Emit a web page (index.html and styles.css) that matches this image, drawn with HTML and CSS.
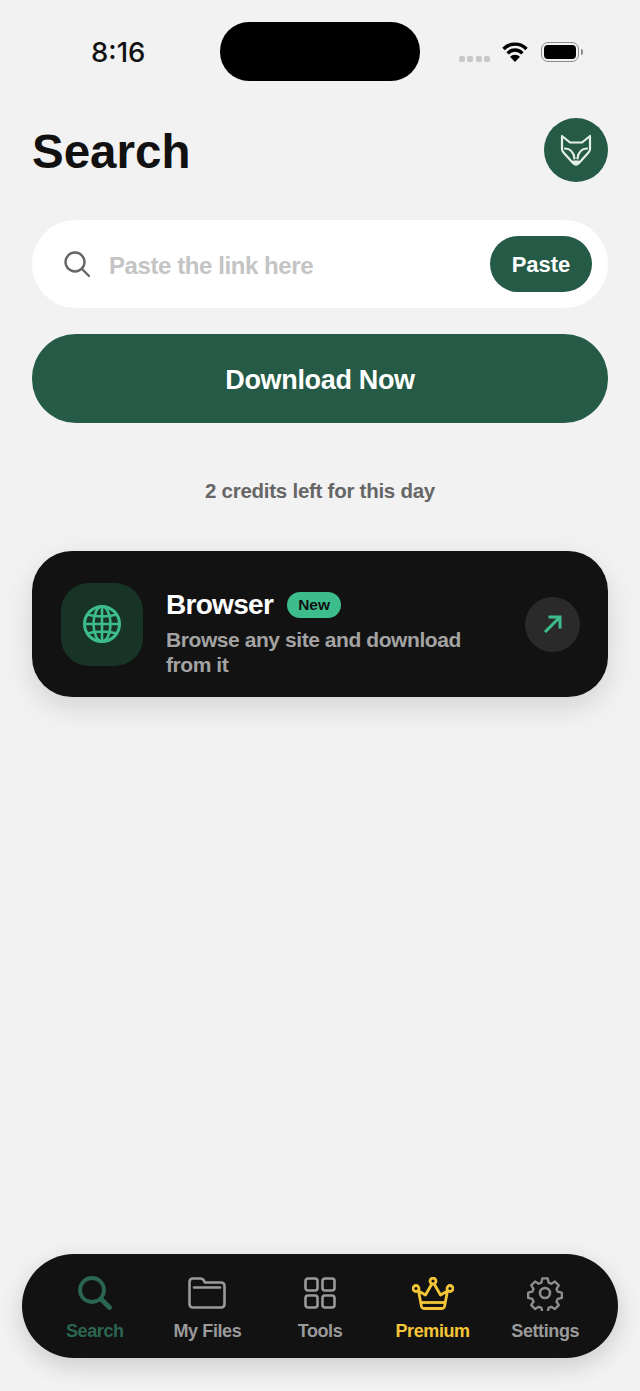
FILE: index.html
```html
<!DOCTYPE html>
<html lang="en">
<head>
    <meta charset="UTF-8">
    <meta name="viewport" content="width=device-width, initial-scale=1.0">
    <title>Search</title>
    <link rel="stylesheet" href="styles.css">
</head>
<body>
    <div class="app">
        <div class="status-bar">
            <span class="time">8:16</span>
            <span class="island"></span>
            <div class="status-icons">
                <span class="signal"><i></i><i></i><i></i><i></i></span>
                <svg class="wifi" width="26" height="20" viewBox="0 0 26 20">
                    <path d="M1.5 7a16 16 0 0 1 23 0M5.600 11.300a10 10 0 0 1 14.800 0" fill="none" stroke="#000" stroke-width="3.400"/>
                    <path d="M13 20l-5-5.200a7 7 0 0 1 10 0z" fill="#000"/>
                </svg>
                <span class="battery"><span class="battery-fill"></span></span>
                <span class="battery-tip"></span>
            </div>
        </div>

        <div class="header">
            <h1>Search</h1>
            <div class="avatar">
                <svg width="32" height="33" viewBox="0 0 32 33" fill="none" stroke="#e6efea" stroke-width="2.200" stroke-linejoin="round" stroke-linecap="round">
                    <path d="M2 2l8 6.500h12L30 2v13q0 2-1.500 3.500L19 29q-3 3-6 0L3.500 18.500Q2 17 2 15z"/>
                    <path d="M5 14.500q8 0 9.500 10M27 14.500q-8 0-9.500 10"/>
                    <path d="M13.500 27.500h5L16 30z" fill="#e6efea"/>
                </svg>
            </div>
        </div>

        <div class="search-box">
            <svg class="search-icon" width="26" height="26" viewBox="0 0 26 26" fill="none" stroke="#666" stroke-width="2.400" stroke-linecap="round">
                <circle cx="11" cy="11" r="9.500"/>
                <path d="M18 18l7 7"/>
            </svg>
            <span class="placeholder">Paste the link here</span>
            <button class="paste-btn">Paste</button>
        </div>

        <button class="download-btn">Download Now</button>

        <p class="credits">2 credits left for this day</p>

        <div class="browser-card">
            <div class="globe-tile">
                <svg width="40" height="40" viewBox="0 0 40 40" fill="none" stroke="#3dbd8c" stroke-width="2.600">
                    <circle cx="20" cy="20" r="17.500" stroke-width="3"/>
                    <ellipse cx="20" cy="20" rx="8.500" ry="17.500"/>
                    <path d="M20 2.500v35M2.500 20h35M5 10.500q15 4 30 0M5 29.500q15-4 30 0"/>
                </svg>
            </div>
            <div class="browser-text">
                <div class="browser-title">
                    <span class="browser-name">Browser</span>
                    <span class="badge">New</span>
                </div>
                <p class="browser-desc">Browse any site and download from it</p>
            </div>
            <div class="arrow-btn">
                <svg width="20" height="20" viewBox="0 0 20 20" fill="none" stroke="#3dbd8c" stroke-width="3">
                    <path d="M2 18L17 3M5.500 3h11.500v11.500"/>
                </svg>
            </div>
        </div>

        <nav class="tab-bar">
            <div class="tab tab-active">
                <div class="tab-icon">
                    <svg width="34" height="34" viewBox="0 0 34 34" fill="none" stroke="#2b6650" stroke-width="3.800" stroke-linecap="round">
                        <circle cx="14" cy="14" r="12"/>
                        <path d="M23 23l8.500 8.500" stroke-width="4.800"/>
                    </svg>
                </div>
                <span>Search</span>
            </div>
            <div class="tab">
                <div class="tab-icon">
                    <svg width="38" height="32" viewBox="0 0 38 32" fill="none" stroke="#9a9a9a" stroke-width="2.600" stroke-linejoin="round">
                        <path d="M1.500 5q0-3.500 3.500-3.500h7.500q2 0 3 1.500l1.500 2.500h16q3.500 0 3.500 3.500V27q0 3.500-3.500 3.500H5q-3.500 0-3.500-3.500z"/>
                        <path d="M6 10.500h26" stroke-linecap="round"/>
                    </svg>
                </div>
                <span>My Files</span>
            </div>
            <div class="tab">
                <div class="tab-icon">
                    <svg width="32" height="32" viewBox="0 0 32 32" fill="none" stroke="#9a9a9a" stroke-width="2.600">
                        <rect x="1.500" y="1.500" width="12" height="12" rx="2.500"/>
                        <rect x="18.500" y="1.500" width="12" height="12" rx="2.500"/>
                        <rect x="1.500" y="18.500" width="12" height="12" rx="2.500"/>
                        <rect x="18.500" y="18.500" width="12" height="12" rx="2.500"/>
                    </svg>
                </div>
                <span>Tools</span>
            </div>
            <div class="tab tab-premium">
                <div class="tab-icon">
                    <svg width="42" height="33" viewBox="0 0 42 33" fill="none" stroke="#f5c538" stroke-width="2.800" stroke-linejoin="round">
                        <circle cx="21" cy="4" r="3"/>
                        <circle cx="4" cy="11.500" r="3"/>
                        <circle cx="38" cy="11.500" r="3"/>
                        <path d="M19.800 7L13.500 18 6.500 14l3 15.500q.5 2 2.500 2h18q2 0 2.500-2l3-15.500-7 4L22.200 7"/>
                        <path d="M9.500 25.500h23"/>
                    </svg>
                </div>
                <span>Premium</span>
            </div>
            <div class="tab">
                <div class="tab-icon">
                    <svg width="36" height="36" viewBox="0 0 36 36" fill="none" stroke="#8e8e8e" stroke-width="2.600" stroke-linejoin="round">
                        <circle cx="18" cy="18" r="5"/>
                        <path d="M15 1.800h6l1 4.600 3 1.300 4-2.500 4.300 4.300-2.500 4 1.300 3 4.600 1v6l-4.600 1-1.300 3 2.500 4-4.300 4.300-4-2.500-3 1.300-1 4.600h-6l-1-4.600-3-1.300-4 2.500-4.300-4.300 2.500-4-1.300-3-4.600-1v-6l4.600-1 1.300-3-2.500-4 4.300-4.300 4 2.500 3-1.300z" transform="translate(1.800 1.800) scale(.9)"/>
                    </svg>
                </div>
                <span>Settings</span>
            </div>
        </nav>
    </div>
</body>
</html>
```

FILE: styles.css
```css
* {
    box-sizing: border-box;
}
body {
    margin: 0;
    background-color: #f2f2f2;
    font-family: "Liberation Sans", Arial, sans-serif;
    color: #111;
}
p, h1 {
    margin: 0;
}
button {
    border: none;
    font-family: inherit;
    font-weight: bold;
    color: #fff;
    background-color: #245a46;
}
.app {
    display: flex;
    flex-direction: column;
    height: 1391px;
    padding: 22px 32px 33px;
    overflow: hidden;
}

/* status bar */
.status-bar {
    display: grid;
    grid-template-columns: 188px 200px 1fr;
    height: 59px;
    align-items: center;
}
.time {
    padding-left: 59px;
    font-family: Inter, sans-serif;
    font-size: 27.5px;
    font-weight: 500;
    color: #111;
}
.island {
    height: 59px;
    background-color: #000;
    border-radius: 29px;
}
.status-icons {
    display: flex;
    align-items: center;
    padding-left: 39px;
}
.signal {
    display: flex;
    gap: 2.4px;
    margin-top: 14px;
}
.signal i {
    width: 6px;
    height: 6px;
    border-radius: 2px;
    background-color: #c8c8c8;
}
.wifi {
    margin-left: 12px;
}
.battery {
    display: block;
    width: 38px;
    height: 20px;
    margin-left: 13px;
    padding: 2px;
    border: 1.5px solid #8a8a8a;
    border-radius: 7px;
}
.battery-fill {
    display: block;
    height: 100%;
    background-color: #000;
    border-radius: 4px;
}
.battery-tip {
    width: 2px;
    height: 6px;
    margin-left: 2px;
    background-color: #8a8a8a;
    border-radius: 0 2px 2px 0;
}

/* header */
.header {
    display: flex;
    justify-content: space-between;
    align-items: center;
    margin-top: 37px;
    height: 64px;
}
h1 {
    padding-top: 2px;
    font-size: 47.5px;
    font-weight: bold;
    color: #111;
}
.avatar {
    display: flex;
    align-items: center;
    justify-content: center;
    width: 64px;
    height: 64px;
    border-radius: 50%;
    background-color: #245a46;
}

/* search */
.search-box {
    display: flex;
    align-items: center;
    height: 88px;
    margin-top: 38px;
    padding: 0 16px 0 32px;
    background-color: #fff;
    border-radius: 44px;
}
.search-icon {
    flex-shrink: 0;
}
.placeholder {
    flex: 1;
    margin-top: 4px;
    margin-left: 19px;
    font-size: 24px;
    letter-spacing: -0.42px;
    font-weight: bold;
    color: #c4c4c4;
}
.paste-btn {
    width: 102px;
    height: 56px;
    padding-top: 2px;
    border-radius: 28px;
    font-size: 22px;
}
.download-btn {
    height: 89px;
    margin-top: 26px;
    padding-top: 4px;
    border-radius: 44px;
    font-size: 27px;
    letter-spacing: -0.33px;
}
.credits {
    margin-top: 56px;
    text-align: center;
    font-size: 20.5px;
    letter-spacing: -0.26px;
    line-height: 24px;
    font-weight: bold;
    color: #666;
}

/* browser card */
.browser-card {
    display: flex;
    align-items: center;
    height: 146px;
    margin-top: 48px;
    padding: 0 28px 0 29px;
    background-color: #121212;
    border-radius: 40px;
    box-shadow: 0 10px 28px rgba(0,0,0,0.13);
}
.globe-tile {
    display: flex;
    align-items: center;
    justify-content: center;
    flex-shrink: 0;
    width: 82px;
    height: 83px;
    background-color: #173426;
    border-radius: 28px;
}
.browser-text {
    flex: 1;
    margin-top: 18px;
    margin-left: 23px;
}
.browser-title {
    display: flex;
    align-items: center;
    gap: 14px;
}
.browser-name {
    font-size: 28px;
    letter-spacing: -0.7px;
    line-height: 32px;
    font-weight: bold;
    color: #fff;
}
.badge {
    padding: 0 11px;
    font-size: 15.5px;
    line-height: 26px;
    font-weight: bold;
    color: #111;
    background-color: #3dbd8c;
    border-radius: 13px;
}
.browser-desc {
    width: 320px;
    margin-top: 6px;
    font-size: 21px;
    letter-spacing: -0.43px;
    line-height: 25px;
    font-weight: bold;
    color: #a3a3a3;
}
.arrow-btn {
    display: flex;
    align-items: center;
    justify-content: center;
    flex-shrink: 0;
    width: 55px;
    height: 55px;
    background-color: #2a2a2a;
    border-radius: 50%;
}

/* tab bar */
.tab-bar {
    display: grid;
    grid-template-columns: repeat(5, 112.6px);
    justify-content: center;
    height: 104px;
    margin: auto -10px 0;
    padding-top: 21px;
    background-color: #121212;
    border-radius: 52px;
    box-shadow: 0 8px 24px rgba(0,0,0,0.16);
}
.tab {
    display: flex;
    flex-direction: column;
    align-items: center;
    gap: 10px;
    font-size: 18px;
    letter-spacing: -0.4px;
    line-height: 21px;
    font-weight: bold;
    color: #9a9a9a;
}
.tab-icon {
    display: flex;
    align-items: center;
    justify-content: center;
    height: 36px;
}
.tab-active {
    color: #2b6650;
}
.tab-premium {
    color: #f5c538;
}
```
